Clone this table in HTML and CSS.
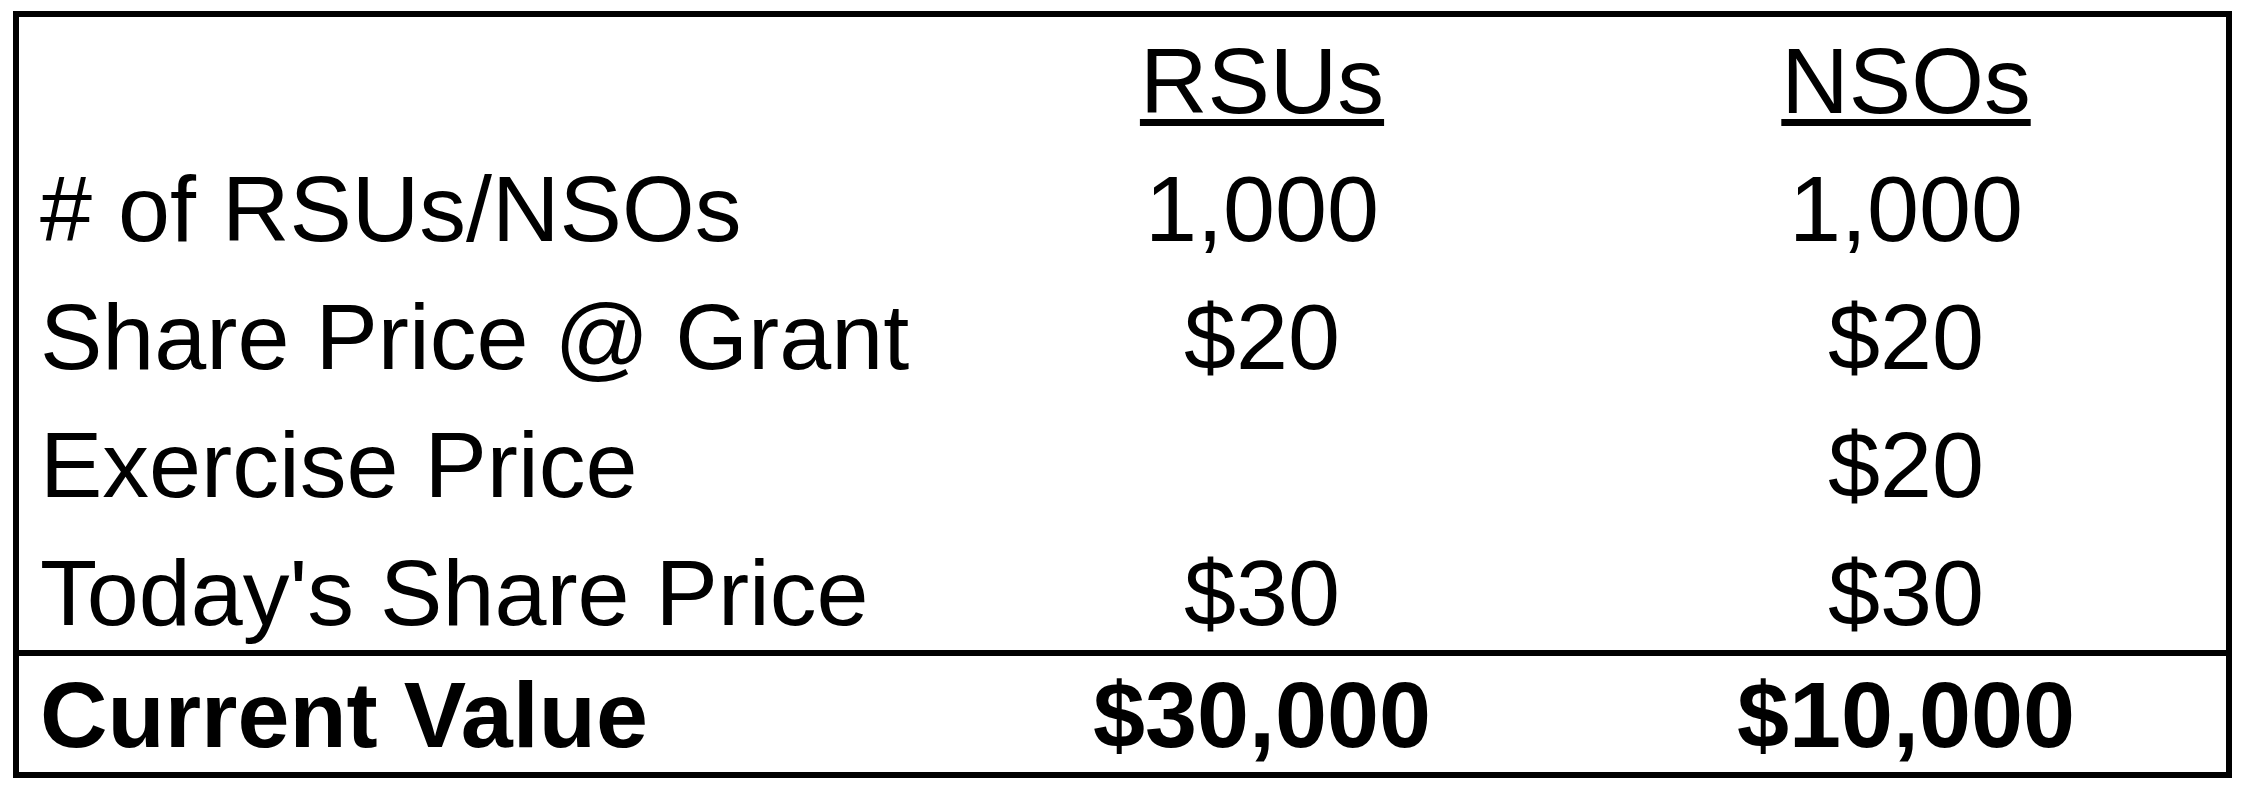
FILE: index.html
```html
<!DOCTYPE html>
<html>
<head>
<meta charset="utf-8">
<link rel="stylesheet" href="styles.css">
</head>
<body>
<div class="box">
  <div class="rows">
    <div class="row">
      <div class="label"></div>
      <div class="val"><span class="head">RSUs</span></div>
      <div class="val"><span class="head">NSOs</span></div>
    </div>
    <div class="row">
      <div class="label"># of RSUs/NSOs</div>
      <div class="val">1,000</div>
      <div class="val">1,000</div>
    </div>
    <div class="row">
      <div class="label">Share Price @ Grant</div>
      <div class="val">$20</div>
      <div class="val">$20</div>
    </div>
    <div class="row">
      <div class="label">Exercise Price</div>
      <div class="val"></div>
      <div class="val">$20</div>
    </div>
    <div class="row">
      <div class="label">Today's Share Price</div>
      <div class="val">$30</div>
      <div class="val">$30</div>
    </div>
  </div>
  <div class="row total">
    <div class="label">Current Value</div>
    <div class="val">$30,000</div>
    <div class="val">$10,000</div>
  </div>
</div>
</body>
</html>
```
FILE: styles.css
```css
html, body {
  margin: 0;
  padding: 0;
  background: #ffffff;
}
body {
  padding: 11px 0 0 13px;
  font-family: "Liberation Sans", Arial, sans-serif;
  color: #000000;
}
.box {
  width: 2207px;
  border: 6px solid #000000;
  display: flex;
  flex-direction: column;
}
.rows {
  height: 633px;
  display: grid;
  grid-template-rows: repeat(5, 128px);
}
.row {
  display: grid;
  grid-template-columns: 1fr 648px 640px;
  font-size: 93.5px;
  line-height: 128px;
  white-space: nowrap;
}
.label {
  padding-left: 21px;
}
.val {
  text-align: center;
}
.head {
  text-decoration: underline;
  text-decoration-thickness: 7px;
  text-underline-offset: 6px;
}
.total {
  border-top: 6px solid #000000;
  height: 122px;
  line-height: 118px;
  padding-bottom: 4px;
  box-sizing: border-box;
  font-weight: bold;
}
```
